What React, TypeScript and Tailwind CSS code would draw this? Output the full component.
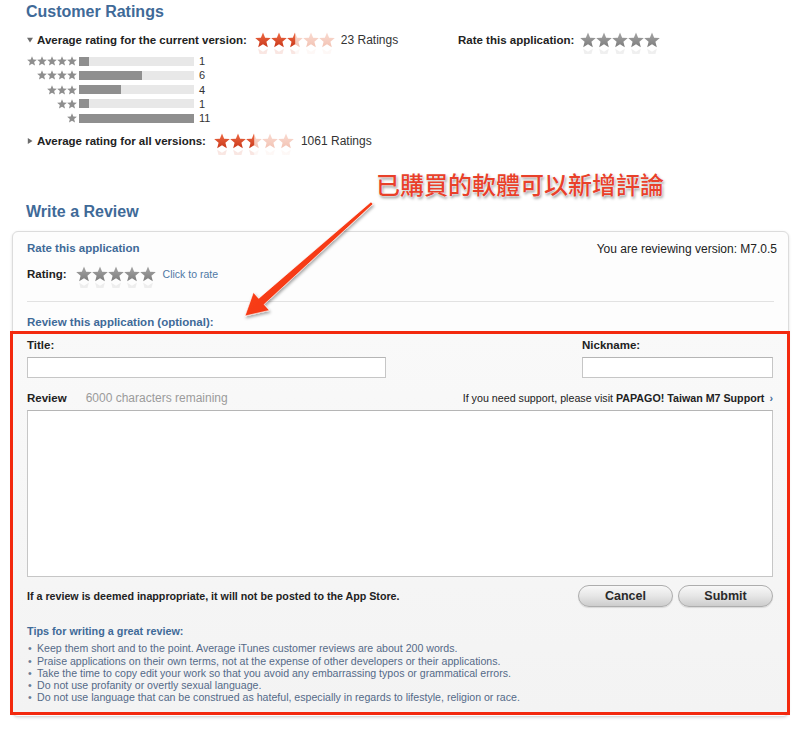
import React, { useId } from 'react';

const STAR =
  '8,0.4 10.12,5.69 15.8,6.07 11.42,9.71 12.82,15.23 8,12.2 3.18,15.23 4.58,9.71 0.2,6.07 5.88,5.69';

type Kind = 'red' | 'pale' | 'half' | 'gray';

const COLORS: Record<string, [string, string]> = {
  red: ['#ef6a43', '#c9381b'],
  pale: ['#fadbd1', '#f2c3b4'],
  gray: ['#a6a6a6', '#7c7c7c'],
};

function Star({ kind, reflect = true }: { kind: Kind; reflect?: boolean }) {
  const raw = useId();
  const id = 's' + raw.replace(/[^a-zA-Z0-9]/g, '');
  const base = kind === 'half' ? 'pale' : kind;
  const grad = (name: string) => (
    <linearGradient id={id + name} x1="0" y1="0" x2="0" y2="1">
      <stop offset="0" stopColor={COLORS[name][0]} />
      <stop offset="1" stopColor={COLORS[name][1]} />
    </linearGradient>
  );
  const body = (
    <>
      <polygon points={STAR} fill={`url(#${id}${base})`} />
      {kind === 'half' && (
        <polygon points={STAR} fill={`url(#${id}red)`} clipPath={`url(#${id}c)`} />
      )}
    </>
  );
  return (
    <svg
      width={16}
      height={reflect ? 22 : 16}
      viewBox={`0 0 16 ${reflect ? 22 : 16}`}
      className={reflect ? '-mb-[6px] shrink-0' : 'shrink-0'}
    >
      <defs>
        {grad('red')}
        {grad('pale')}
        {grad('gray')}
        <clipPath id={id + 'c'}>
          <rect x="0" y="0" width="8.2" height="16" />
        </clipPath>
      </defs>
      {body}
      {reflect && (
        <g transform="translate(0,32) scale(1,-1)" opacity="0.13">
          {body}
        </g>
      )}
    </svg>
  );
}

function MiniStar() {
  return (
    <svg width={10} height={10} viewBox="0 0 16 16" className="shrink-0">
      <polygon points={STAR} fill="#8e8e8e" />
    </svg>
  );
}

function Tri({ down }: { down?: boolean }) {
  return (
    <svg width={6} height={6} viewBox="0 0 6 6" className="ml-[1px] shrink-0">
      {down ? <polygon points="0,0.8 6,0.8 3,5.5" fill="#6b6b6b" /> : <polygon points="0.8,0 5.5,3 0.8,6" fill="#6b6b6b" />}
    </svg>
  );
}

function RatingStars({ kinds }: { kinds: Kind[] }) {
  return (
    <div className="flex items-center">
      {kinds.map((k, i) => (
        <Star key={i} kind={k} />
      ))}
    </div>
  );
}

const hist: [number, number][] = [
  [5, 1],
  [4, 6],
  [3, 4],
  [2, 1],
  [1, 11],
];

const tips = [
  'Keep them short and to the point. Average iTunes customer reviews are about 200 words.',
  'Praise applications on their own terms, not at the expense of other developers or their applications.',
  'Take the time to copy edit your work so that you avoid any embarrassing typos or grammatical errors.',
  'Do not use profanity or overtly sexual language.',
  'Do not use language that can be construed as hateful, especially in regards to lifestyle, religion or race.',
];

export default function App() {
  const redKinds: Kind[] = ['red', 'red', 'half', 'pale', 'pale'];
  const grayKinds: Kind[] = ['gray', 'gray', 'gray', 'gray', 'gray'];
  return (
    <div className="relative h-[730px] w-[800px] overflow-hidden bg-white font-['Liberation_Sans',Arial,sans-serif] text-[#222]">
      <div className="pl-[26px]">
        <h1 className="mt-[2px] text-[16px] font-bold leading-[20px] text-[#3f6a98]">Customer Ratings</h1>

        <div className="mt-[8px] flex h-[20px] items-center">
          <div className="flex w-[432px] items-center">
            <Tri down />
            <span className="ml-[4px] text-[11.5px] font-bold leading-[14px]">Average rating for the current version:</span>
            <div className="ml-[8px]">
              <RatingStars kinds={redKinds} />
            </div>
            <span className="ml-[6px] text-[12px] leading-[14px] text-[#333]">23 Ratings</span>
          </div>
          <span className="text-[11.5px] font-bold leading-[14px]">Rate this application:</span>
          <div className="ml-[6px]">
            <RatingStars kinds={grayKinds} />
          </div>
        </div>

        <div className="mt-[4px]">
          {hist.map(([n, c]) => (
            <div key={n} className="flex h-[14.25px] items-center">
              <div className="flex w-[51px] justify-end">
                {Array.from({ length: n }).map((_, i) => (
                  <MiniStar key={i} />
                ))}
              </div>
              <div className="ml-[2px] h-[9px] w-[115px] bg-[#e8e8e8]">
                <div className="h-full bg-[#8f8f8f]" style={{ width: `${Math.round((115 * c) / 11)}px` }} />
              </div>
              <span className="ml-[5px] text-[11px] leading-[12px] text-[#333]">{c}</span>
            </div>
          ))}
        </div>

        <div className="mt-[6px] flex h-[20px] items-center">
          <Tri />
          <span className="ml-[4px] text-[11.5px] font-bold leading-[14px]">Average rating for all versions:</span>
          <div className="ml-[8px]">
            <RatingStars kinds={redKinds} />
          </div>
          <span className="ml-[7px] text-[12px] leading-[14px] text-[#333]">1061 Ratings</span>
        </div>

        <div className="mt-[19px] h-[28px] pl-[350px] font-['Noto_Sans_CJK_TC','Noto_Sans_CJK_SC',sans-serif] text-[24px] font-medium leading-[28px] text-[#e8402a] [text-shadow:0_0_1px_#fff,0_0_2px_#fff,1px_2px_3px_rgba(0,0,0,0.45)]">
          已購買的軟體可以新增評論
        </div>

        <h1 className="mt-[4px] text-[16px] font-bold leading-[20px] text-[#3f6a98]">Write a Review</h1>
      </div>

      <div className="ml-[12px] mt-[9px] w-[777px] rounded-[6px] border border-[#dcdcdc] bg-[#fdfdfd] shadow-[0_1px_3px_rgba(0,0,0,0.12)]">
        <div className="flex justify-between pl-[14px] pr-[11px] pt-[8px]">
          <span className="text-[11.5px] font-bold leading-[16px] text-[#3f6a98]">Rate this application</span>
          <span className="text-[12px] leading-[18px] text-[#222]">You are reviewing version: M7.0.5</span>
        </div>
        <div className="mt-[8px] flex h-[16px] items-center pl-[14px]">
          <span className="text-[11.5px] font-bold leading-[14px]">Rating:</span>
          <div className="ml-[9px]">
            <RatingStars kinds={grayKinds} />
          </div>
          <span className="ml-[7px] text-[10.5px] leading-[14px] text-[#4f78a5]">Click to rate</span>
        </div>
        <div className="mx-[14px] mt-[19px] h-px bg-[#e2e2e2]" />
        <div className="mt-[12px] pl-[14px] text-[11.5px] font-bold leading-[16px] text-[#3f6a98]">
          Review this application (optional):
        </div>

        <div className="-ml-[3px] -mr-[2px] mb-[1px] mt-[1px] border-[3px] border-[#f3290e] bg-gradient-to-b from-[#f9f9f9] to-[#f3f3f3] pb-[8px] pl-[14px] pr-[14px] pt-[4px]">
          <div className="flex justify-between">
            <div>
              <div className="text-[11.5px] font-bold leading-[14px]">Title:</div>
              <div className="mt-[5px] h-[21px] w-[359px] border border-[#c6c6c6] border-t-[#b5b5b5] bg-white" />
            </div>
            <div>
              <div className="text-[11.5px] font-bold leading-[14px]">Nickname:</div>
              <div className="mt-[5px] h-[21px] w-[191px] border border-[#c6c6c6] border-t-[#b5b5b5] bg-white" />
            </div>
          </div>

          <div className="mt-[13px] flex h-[14px] items-center justify-between">
            <div className="flex items-center">
              <span className="text-[11.5px] font-bold leading-[14px]">Review</span>
              <span className="ml-[19px] text-[12px] leading-[14px] text-[#9b9b9b]">6000 characters remaining</span>
            </div>
            <div className="text-[10.7px] leading-[14px] text-[#222]">
              If you need support, please visit <span className="font-bold">PAPAGO! Taiwan M7 Support</span>
              <span className="ml-[5px] font-bold text-[#3f6a98]">›</span>
            </div>
          </div>
          <div className="mt-[5px] h-[167px] border border-[#c6c6c6] border-t-[#b5b5b5] bg-white" />

          <div className="mt-[8px] flex h-[22px] items-center justify-between">
            <span className="text-[10.7px] font-bold leading-[14px] text-[#222]">
              If a review is deemed inappropriate, it will not be posted to the App Store.
            </span>
            <div className="flex gap-[5px]">
              <div className="flex h-[22px] w-[95px] items-center justify-center rounded-full border border-[#adadad] bg-gradient-to-b from-[#f8f8f8] via-[#e6e6e6] to-[#cdcdcd] text-[12.5px] font-bold text-[#2a2a2a] shadow-[0_1px_1px_rgba(0,0,0,0.12)]">
                Cancel
              </div>
              <div className="flex h-[22px] w-[95px] items-center justify-center rounded-full border border-[#adadad] bg-gradient-to-b from-[#f8f8f8] via-[#e6e6e6] to-[#cdcdcd] text-[12.5px] font-bold text-[#2a2a2a] shadow-[0_1px_1px_rgba(0,0,0,0.12)]">
                Submit
              </div>
            </div>
          </div>

          <div className="mt-[17px] text-[10.8px] font-bold leading-[14px] text-[#3f6a98]">Tips for writing a great review:</div>
          <ul className="mt-[4px]">
            {tips.map((t) => (
              <li key={t} className="flex text-[10.6px] leading-[12.25px] text-[#546a88]">
                <span className="w-[10px] shrink-0 pl-[1px] text-[#6a7c96]">•</span>
                <span>{t}</span>
              </li>
            ))}
          </ul>
        </div>
      </div>

      <svg className="pointer-events-none absolute left-0 top-0" width={800} height={730} viewBox="0 0 800 730">
        <defs>
          <linearGradient id="arrowGrad" x1="0" y1="0" x2="1" y2="1">
            <stop offset="0" stopColor="#ff4a22" />
            <stop offset="1" stopColor="#ee2c0c" />
          </linearGradient>
          <filter id="arrowShadow" x="-20%" y="-20%" width="140%" height="140%">
            <feDropShadow dx="1" dy="2" stdDeviation="1.5" floodColor="#000" floodOpacity="0.35" />
          </filter>
        </defs>
        <polygon
          points="371,201.9 373,204.1 264.1,304.4 269.4,310.4 245,316 253.4,292.4 258.7,298.4"
          fill="url(#arrowGrad)"
          stroke="#fff"
          strokeWidth="0.6"
          strokeLinejoin="round"
          filter="url(#arrowShadow)"
        />
      </svg>
    </div>
  );
}
